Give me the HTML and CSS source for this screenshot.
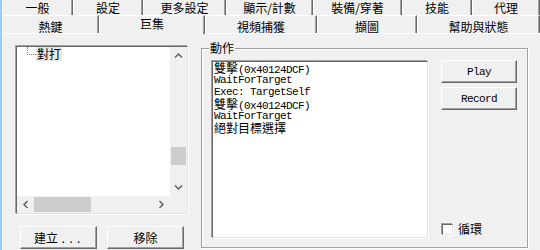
FILE: index.html
```html
<!DOCTYPE html>
<html lang="zh-Hant">
<head>
  <meta charset="UTF-8">
  <meta name="viewport" content="width=device-width, initial-scale=1">
  <title>巨集</title>
  <link rel="stylesheet" href="styles.css">
</head>
<body>
<div class="window">

  <!-- Onglets (deux rangées) -->
  <div class="tabs">
    <div class="tab-row back">
      <div class="tab">一般</div>
      <div class="tab">設定</div>
      <div class="tab">更多設定</div>
      <div class="tab">顯示/計數</div>
      <div class="tab">裝備/穿著</div>
      <div class="tab">技能</div>
      <div class="tab">代理</div>
    </div>
    <div class="tab-row front">
      <div class="tab">熱鍵</div>
      <div class="tab current">巨集</div>
      <div class="tab">視頻捕獲</div>
      <div class="tab">擷圖</div>
      <div class="tab">幫助與狀態</div>
    </div>
  </div>

  <div class="panel">

    <!-- Liste des macros -->
    <div class="macro-col">
      <div class="tree sunken">
        <div class="tree-main">
          <div class="tree-body">
            <div class="tree-item"><span class="branch"></span><span class="tree-label">對打</span></div>
          </div>
          <div class="vscroll">
            <div class="arrow"><svg width="9" height="5" viewBox="0 0 9 5"><path d="M1 4.5 4.5 1 8 4.5" fill="none" stroke="#606060" stroke-width="1.5"/></svg></div>
            <div class="vtrack"><div class="vthumb"></div></div>
            <div class="arrow"><svg width="9" height="5" viewBox="0 0 9 5"><path d="M1 .5 4.5 4 8 .5" fill="none" stroke="#606060" stroke-width="1.5"/></svg></div>
          </div>
        </div>
        <div class="hscroll">
          <div class="arrow"><svg width="5" height="9" viewBox="0 0 5 9"><path d="M4.5 1 1 4.5 4.5 8" fill="none" stroke="#606060" stroke-width="1.5"/></svg></div>
          <div class="htrack"><div class="hthumb"></div></div>
          <div class="arrow"><svg width="5" height="9" viewBox="0 0 5 9"><path d="M.5 1 4 4.5 .5 8" fill="none" stroke="#606060" stroke-width="1.5"/></svg></div>
          <div class="corner"></div>
        </div>
      </div>
      <div class="col-buttons">
        <button class="btn">建立<span class="mono dots">...</span></button>
        <button class="btn">移除</button>
      </div>
    </div>

    <!-- Groupe "動作" -->
    <div class="group">
      <span class="group-label">動作</span>
      <div class="actions sunken">
        <div class="line"><span class="cjk">雙擊</span>(0x40124DCF)</div>
        <div class="line">WaitForTarget</div>
        <div class="line">Exec: TargetSelf</div>
        <div class="line"><span class="cjk">雙擊</span>(0x40124DCF)</div>
        <div class="line">WaitForTarget</div>
        <div class="line"><span class="cjk">絕對目標選擇</span></div>
      </div>
      <div class="side">
        <button class="btn mono">Play</button>
        <button class="btn mono record">Record</button>
        <label class="check"><span class="box sunken"></span>循環</label>
      </div>
    </div>

  </div>
</div>
</body>
</html>
```

FILE: styles.css
```css
* { margin: 0; padding: 0; box-sizing: border-box; }

body {
  font-family: "Noto Sans CJK TC", sans-serif;
  font-size: 12px;
  color: #000;
  background-color: #f0f0f0;
}

.window {
  width: 540px;
  height: 250px;
  overflow: hidden;
  border-left: 2px solid #9ccaf0;
  display: flex;
  flex-direction: column;
}

.mono {
  font-family: "Liberation Mono", monospace;
  font-size: 11px;
  letter-spacing: -0.6px;
}

.cjk {
  font-family: "Noto Sans CJK TC", sans-serif;
  font-size: 12px;
  letter-spacing: 0;
}

/* Onglets */
.tab-row {
  display: flex;
  align-items: flex-start;
}

.tab {
  background-color: #f0f0f0;
  border-left: 1px solid #fff;
  border-right: 1px solid #696969;
  box-shadow: inset -1px 0 #a0a0a0;
  text-align: center;
  white-space: nowrap;
  line-height: 12px;
}

.back .tab {
  height: 15px;
  padding-top: 2px;
}

.back .tab:nth-child(1) { width: 71px; }
.back .tab:nth-child(2) { width: 70px; }
.back .tab:nth-child(3) { width: 83px; }
.back .tab:nth-child(4) { width: 87px; }
.back .tab:nth-child(5) { width: 89px; }
.back .tab:nth-child(6) { width: 70px; }
.back .tab:nth-child(7) { width: 68px; }

.front {
  height: 18px;
}

.front .tab {
  height: 18px;
  border-top: 1px solid #fff;
  padding-top: 5px;
}

.front .tab:nth-child(1) { width: 97px; }
.front .tab:nth-child(2) { width: 106px; }
.front .tab:nth-child(3) { width: 112px; }
.front .tab:nth-child(4) { width: 100px; }
.front .tab:nth-child(5) { width: 123px; }

.front .tab.current {
  position: relative;
  z-index: 1;
  height: 19px;
  padding-top: 2px;
}

/* Panneau */
.panel {
  flex: 1;
  display: flex;
  align-items: flex-start;
  border-top: 1px solid #fff;
  border-left: 1px solid #fff;
  padding: 12px 0 0 13px;
}

.sunken {
  border: 1px solid;
  border-color: #696969 #e3e3e3 #e3e3e3 #696969;
  box-shadow: -1px -1px #a0a0a0, 1px 1px #fff;
}

.btn {
  height: 23px;
  border: 1px solid;
  border-color: #fff #696969 #696969 #fff;
  box-shadow: inset -1px -1px #a0a0a0;
  background-color: #f0f0f0;
  font-family: inherit;
  font-size: 12px;
  color: #000;
}

.btn.mono {
  font-family: "Liberation Mono", monospace;
  font-size: 11px;
  letter-spacing: -0.6px;
}

.macro-col {
  width: 172px;
}

.tree {
  height: 168px;
  display: flex;
  flex-direction: column;
  background-color: #fff;
}

.tree-main {
  flex: 1;
  display: flex;
  min-height: 0;
}

.tree-body {
  flex: 1;
  padding-left: 10px;
}

.tree-item {
  display: flex;
  align-items: flex-start;
}

.branch {
  width: 9px;
  height: 8px;
  border-left: 1px dotted #808080;
  border-bottom: 1px dotted #808080;
}

.tree-label {
  background-color: #e8e8e8;
  padding: 0 1px;
  line-height: 14px;
}

.vscroll {
  width: 17px;
  display: flex;
  flex-direction: column;
  background-color: #f0f0f0;
}

.arrow {
  width: 17px;
  height: 17px;
  flex-shrink: 0;
  display: flex;
  align-items: center;
  justify-content: center;
}

.vtrack { flex: 1; }

.vthumb {
  margin: 83px 1px 0;
  height: 18px;
  background-color: #cdcdcd;
}

.hscroll {
  height: 17px;
  display: flex;
  background-color: #f0f0f0;
}

.htrack { flex: 1; }

.hthumb {
  width: 57px;
  height: 15px;
  margin-top: 1px;
  background-color: #cdcdcd;
}

.corner { width: 17px; }

.col-buttons {
  display: flex;
  gap: 10px;
  margin-top: 12px;
  padding-left: 4px;
}

.col-buttons .btn { width: 77px; }

.dots {
  margin-left: 2px;
  letter-spacing: 1px;
}

/* Groupe */
.group {
  position: relative;
  width: 327px;
  height: 200px;
  margin: 2px 0 0 13px;
  border: 1px solid #a0a0a0;
  box-shadow: inset 1px 1px #fff, 1px 1px #fff;
  display: flex;
  align-items: flex-start;
  padding: 12px 0 0 10px;
}

.group-label {
  position: absolute;
  left: 7px;
  top: -8px;
  padding: 0 1px;
  line-height: 13px;
  background-color: #f0f0f0;
}

.actions {
  width: 216px;
  height: 177px;
  background-color: #fff;
  padding: 0 0 0 1px;
  font-family: "Liberation Mono", monospace;
  font-size: 11px;
  letter-spacing: -0.6px;
  line-height: 12px;
}

.line {
  height: 12px;
  white-space: nowrap;
}

.side {
  height: 178px;
  margin: -1px 0 0 13px;
  display: flex;
  flex-direction: column;
}

.side .btn { width: 76px; }

.side .record { margin-top: 4px; }

.check {
  margin-top: auto;
  margin-bottom: 2px;
  display: flex;
  align-items: center;
  gap: 5px;
  line-height: 14px;
}

.box {
  width: 11px;
  height: 11px;
  margin-left: 1px;
  background-color: #fff;
}
```
